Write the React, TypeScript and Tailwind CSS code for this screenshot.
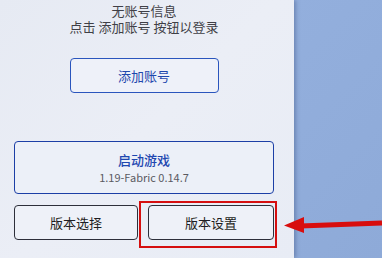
import React from 'react';

const font = { fontFamily: '"Noto Sans CJK SC", "Noto Sans", sans-serif' };

export default function App() {
  return (
    <div
      className="relative flex h-[258px] w-[382px] overflow-hidden bg-[linear-gradient(135deg,#9cb8e4_0%,#93afdd_45%,#8eaad8_100%)]"
      style={font}
    >
      {/* left launcher panel */}
      <div className="relative z-10 flex h-full w-[294px] shrink-0 flex-col bg-[linear-gradient(135deg,#e6eaf3_0%,#ebeef6_50%,#e8ecf5_100%)] shadow-[2px_0_4px_rgba(40,60,110,0.35)]">
        <div className="flex w-[288px] flex-col items-center pt-[3px]">
          <div className="text-center text-[13px] leading-[16px] text-[#3f3f46]">
            <div>无账号信息</div>
            <div>点击 添加账号 按钮以登录</div>
          </div>
          <button className="mt-[23px] flex h-[35px] w-[149px] items-center justify-center rounded-[4px] border border-[#2a55bd] bg-[#eef1f9] text-[13px] text-[#1f48ad]">
            添加账号
          </button>
        </div>

        <div className="mt-[48px] flex flex-col gap-[11px] pl-[14px]">
          <button className="flex h-[53px] w-[260px] flex-col items-center justify-center rounded-[4px] border border-[#1c3fa6] bg-[#ecf0f8]">
            <span className="text-[13px] font-medium leading-[17px] text-[#1e47b0]">启动游戏</span>
            <span className="mt-[3px] text-[11px] leading-[13px] text-[#5a5a62]">1.19-Fabric 0.14.7</span>
          </button>
          <div className="flex gap-[10px]">
            <button className="flex h-[35px] w-[124px] items-center justify-center rounded-[4px] border border-[#2d2f3a] bg-[#eef1f8] text-[13px] text-[#1e1e22]">
              版本选择
            </button>
            <button className="flex h-[35px] w-[126px] items-center justify-center rounded-[4px] border border-[#2d2f3a] bg-[#eef1f8] text-[13px] text-[#1e1e22]">
              版本设置
            </button>
          </div>
        </div>

        {/* red highlight */}
        <div className="absolute left-[139px] top-[201px] h-[47px] w-[138px] border-2 border-[#d50f0f]" />
      </div>

      {/* arrow annotation */}
      <svg className="absolute left-0 top-0 z-20" width="382" height="258" viewBox="0 0 382 258">
        <line x1="300" y1="226" x2="382" y2="223" stroke="#d80d0d" strokeWidth="5" />
        <polygon points="284,225.5 304,217 304,233" fill="#d80d0d" />
      </svg>
    </div>
  );
}
